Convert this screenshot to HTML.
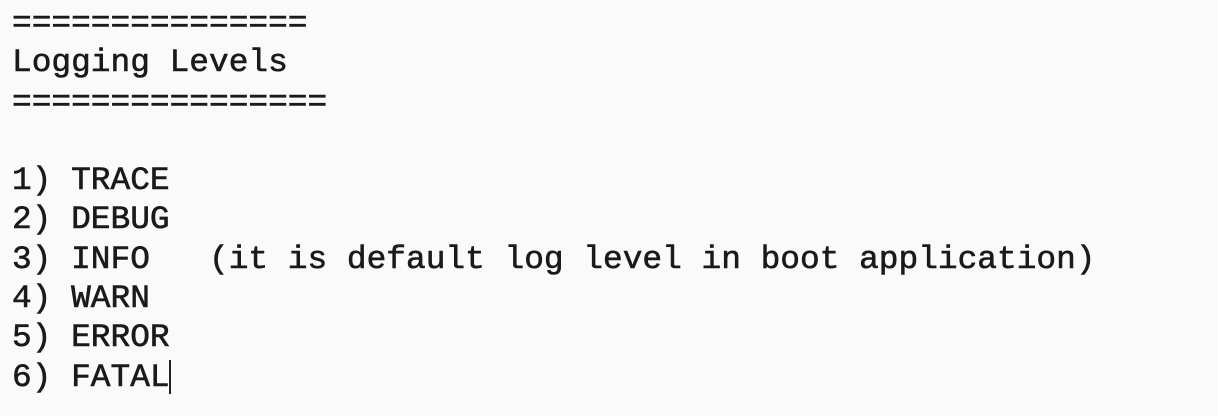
<!DOCTYPE html>
<html><head><meta charset="utf-8"><style>
html,body{margin:0;padding:0;background:#fafafa;width:1218px;height:416px;overflow:hidden}
pre{margin:0;position:absolute;left:12px;top:4px;font-family:"Liberation Mono",monospace;font-size:32.85px;line-height:39.3px;color:#1a1a1a;-webkit-text-stroke:0.6px #1a1a1a}
.cur{position:absolute;left:169px;top:360px;width:2px;height:34px;background:#222}
</style></head><body>
<pre>===============
Logging Levels
================

1) TRACE
2) DEBUG
3) INFO   (it is default log level in boot application)
4) WARN
5) ERROR
6) FATAL</pre>
<div class="cur"></div>
</body></html>
